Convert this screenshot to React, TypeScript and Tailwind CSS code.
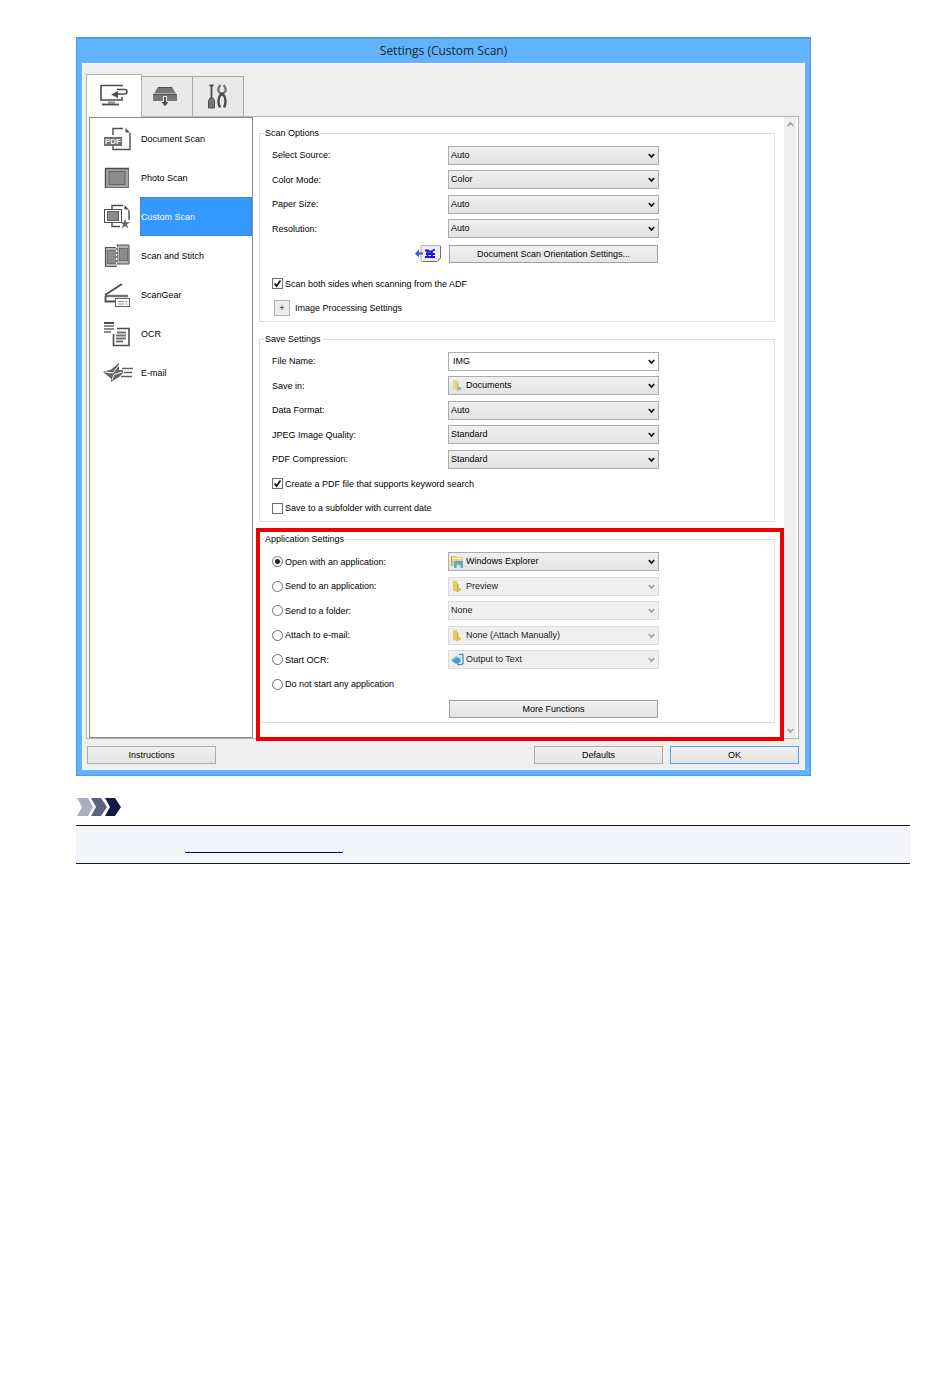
import { useState } from 'react';
import type { ReactNode } from 'react';

interface SelectBoxProps {
    id?: string;
    label: string;
    value: string;
    icon?: ReactNode;
    disabled?: boolean;
}

interface RowProps {
    label: string;
    htmlFor?: string;
    children: ReactNode;
}

const DARK = '#4d4d4d';
const MID = '#8c8c8c';

const Chevron = ({ color = '#111111' }: { color?: string }) => (
    <svg width="7" height="6" viewBox="0 0 7 6" fill="none">
        <path d="M0.8 1 L3.5 4 L6.2 1" stroke={color} strokeWidth="1.7" />
    </svg>
);

/* ---- tab icons ---- */

const ComputerIcon = () => (
    <svg width="28" height="24" viewBox="0 0 28 24" fill="none" stroke={DARK}>
        <path d="M22 2.5 V1.5 H1 V16 H22 V13" strokeWidth="1.6" />
        <path d="M17 5.5 H25 Q27 5.5 27 7.5 Q27 10 24.5 10 H17" strokeWidth="1.5" />
        <path d="M11 10.5 L18 7 V14 Z" fill={DARK} stroke="none" />
        <path d="M8 18.5 H15" stroke={MID} strokeWidth="2" />
        <path d="M2 20.5 H19" strokeWidth="1.8" />
    </svg>
);

const ScannerIcon = () => (
    <svg width="28" height="22" viewBox="0 0 28 22">
        <path d="M5 1 H19 L23 7.5 H1 Z" fill="#777777" />
        <path d="M5 1.5 H19" stroke={DARK} />
        <path d="M0 9 H24 V15 H0 Z" fill="#777777" />
        <path d="M0 8.5 H24" stroke={DARK} />
        <path d="M10.5 10.5 H13.5 V15.5 H16.5 L12 21 L7.5 15.5 H10.5 Z" fill={DARK} stroke="#eeeeee" />
    </svg>
);

const ToolsIcon = () => (
    <svg width="20" height="25" viewBox="0 0 20 25" fill="none">
        <path d="M1.5 1.5 H5.5 M3.5 1 V14" stroke={DARK} strokeWidth="1.8" />
        <path d="M2 14 H5 L6.5 17 V24 H0.5 V17 Z" fill="#777777" stroke={DARK} />
        <path d="M12.5 1 Q9.5 4 10.5 7.5 L14 10.5 L17.5 7.5 Q18.5 4 15.5 1" stroke="#777777" strokeWidth="2.2" />
        <path d="M13 10 Q8.5 16 12 23.5 M15 10 Q19.5 16 16 23.5" stroke={DARK} strokeWidth="2.4" />
        <circle cx="14" cy="10" r="1.8" fill={DARK} />
    </svg>
);

/* ---- sidebar icons, all on a 30x26 canvas ---- */

const ListIcon = ({ children }: { children: ReactNode }) => (
    <svg width="30" height="26" viewBox="0 0 30 26" fill="none">{children}</svg>
);

const DocumentIcon = () => (
    <ListIcon>
        <path d="M10 9 V2.5 H20 M10 20 V23.5 H27 V7" stroke={DARK} strokeWidth="1.4" />
        <path d="M22.5 2 V6.5 H27 Z" fill={DARK} />
        <rect x="1" y="11" width="18" height="9" fill="#707070" />
        <text x="10" y="18" textAnchor="middle" fontSize="8" fontWeight="bold" fill="#f4f4f4">PDF</text>
    </ListIcon>
);

const PhotoIcon = () => (
    <ListIcon>
        <rect x="2" y="3" width="24" height="20" fill="#a6a6a6" />
        <path d="M2.5 23 V3.5 H26" stroke={DARK} strokeWidth="1.4" />
        <path d="M25.5 4 V22.5 H3" stroke="#707070" />
        <rect x="6" y="6.5" width="16" height="13" fill={MID} stroke="#606060" />
    </ListIcon>
);

const CustomIcon = () => (
    <ListIcon>
        <path d="M9 6 V1.5 H20 M26 6 V16 M9 19 V22.5 H17" stroke={DARK} strokeWidth="1.4" />
        <path d="M21.5 1 V5.5 H26 Z" fill={DARK} />
        <rect x="1.5" y="5.5" width="17" height="13" fill="#ffffff" stroke={DARK} />
        <rect x="4.5" y="7.5" width="11" height="9" fill={MID} stroke="#606060" />
        <path d="M22 14.5 L23.3 18.3 H27 L24 20.5 L25.2 24.5 L22 22 L18.8 24.5 L20 20.5 L17 18.3 H20.7 Z" fill="#6a6a6a" />
    </ListIcon>
);

const StitchIcon = () => (
    <ListIcon>
        <path d="M2 4 H14 V24 H2 Z" fill="#b5b5b5" />
        <path d="M2.5 24 V4.5 H13" stroke={DARK} strokeWidth="1.2" />
        <rect x="4.5" y="7.5" width="8" height="13" fill={MID} stroke="#707070" />
        <path d="M14 2 H26 V21 H14 Z" fill="#b5b5b5" stroke={DARK} />
        <rect x="16.5" y="5.5" width="8" height="12" fill={MID} stroke="#707070" />
        <path d="M13.5 3 V23" stroke="#ffffff" strokeWidth="1.5" strokeDasharray="2 2" />
        <path d="M2 23.5 H14" stroke="#606060" />
    </ListIcon>
);

const ScanGearIcon = () => (
    <ListIcon>
        <path d="M2 13 L19 2" stroke={DARK} strokeWidth="1.8" />
        <path d="M2 14 H25" stroke="#707070" strokeWidth="2.4" />
        <path d="M2.5 14 V19.5 H12" stroke={DARK} strokeWidth="1.8" />
        <rect x="12.5" y="16.5" width="14" height="8" fill="#ffffff" stroke="#606060" />
        <path d="M15 19.5 H21 M15 22 H21 M22.5 19.5 H24.5 M22.5 22 H24.5" stroke={MID} />
    </ListIcon>
);

const OcrIcon = () => (
    <ListIcon>
        <path d="M1 2 H11" stroke={DARK} strokeWidth="2" />
        <path d="M1 5 H11 M1 8 H11 M1 11 H8" stroke={MID} strokeWidth="1.8" />
        <path d="M14 7.5 H26 V24.5 H10.5 V13" stroke={DARK} strokeWidth="1.6" />
        <path d="M14 11.5 H23 M13 14.5 H23 M13 17.5 H23 M13 20.5 H20" stroke="#707070" strokeWidth="1.8" />
    </ListIcon>
);

const EmailIcon = () => (
    <ListIcon>
        <path d="M0 12 L8 9.5 L16 3 V10 L20 10 V13 L16 17 L8 22 V18.5 Z" fill="#666666" />
        <path d="M2 12 L10 13 L16 5 M9 20 L11 14.5 L19 12" stroke="#ffffff" />
        <path d="M19 8.5 H31 M21 12.5 H29 M18 16.5 H29" stroke="#606060" strokeWidth="1.3" />
    </ListIcon>
);

/* ---- small icons inside the drop-downs ---- */

const FolderIcon = ({ faded = false }: { faded?: boolean }) => (
    <svg width="13" height="13" viewBox="0 0 13 13">
        <path d="M2 1 H6 V12 L2 10.5 Z" fill={faded ? '#ecd98f' : '#f0c95c'} />
        <path d="M6 3 L7.5 4 V12 H6 Z" fill={faded ? '#b8bfae' : '#d9a93a'} />
        <path d="M7 8 H10 V11 H7 Z" fill={faded ? '#93b3d0' : '#e8c65f'} />
    </svg>
);

const ExplorerIcon = () => (
    <svg width="13" height="13" viewBox="0 0 13 13">
        <path d="M0 1 H5 L6 2 H12 V11 H0 Z" fill="#f0cf6b" />
        <path d="M1 3.5 H11" stroke="#fff3c0" />
        <path d="M3 6 H12 V13 H9.5 V9.5 H5.5 V13 H3 Z" fill="#55a9dc" />
        <path d="M0.5 1 V11" stroke="#c99b35" />
    </svg>
);

const OutputIcon = () => (
    <svg width="13" height="13" viewBox="0 0 13 13">
        <path d="M8 1.5 L12 1 V11 L7 12 V9" fill="#d7eef7" stroke="#3c6f9c" />
        <path d="M0 7 L5 3 L9.5 5 V9 L5 11 Z" fill="#3fa3c9" />
        <path d="M1 7 L5 4 L9 5.5" stroke="#a5dcec" fill="none" />
    </svg>
);

const OrientationIcon = () => (
    <svg width="26" height="19" viewBox="0 0 26 19">
        <path d="M6 1.5 H25.5 V14 L22 17.5 H6 Z" fill="#eeeeee" stroke="#b4b4b4" />
        <path d="M25.5 2 V14 L22 17.5 H8" stroke="#6d6d6d" fill="none" />
        <path d="M0 9.5 L4 5.5 V8.5 H8 V10.5 H4 V13.5 Z" fill="#3757c8" />
        <path d="M10 6.5 H13 L15 8 L20 5.5 M10 13 H20 M11 10 H20 M12.5 6 V13 M17 8 V13" stroke="#1414e6" strokeWidth="1.8" fill="none" />
    </svg>
);

const SelectBox = ({ id, label, value, icon, disabled }: SelectBoxProps) => (
    <div className="relative w-[211px] shrink-0">
        <select
            id={id}
            aria-label={label}
            disabled={disabled}
            className={`block h-[19px] w-full appearance-none border pr-4 leading-[17px] opacity-100 outline-none ${icon ? 'pl-[17px]' : 'pl-[2px]'} ${
                disabled
                    ? 'border-[#dcdcdc] bg-[#efefef] text-[#222222]'
                    : 'border-[#acacac] bg-linear-to-b from-[#f0f0f0] to-[#e3e3e3] text-black'
            }`}
        >
            <option>{value}</option>
        </select>
        {icon && <span className="pointer-events-none absolute top-[3px] left-[3px]">{icon}</span>}
        <span className="pointer-events-none absolute top-[7px] right-[4px]">
            <Chevron color={disabled ? '#a0a0a0' : '#111111'} />
        </span>
    </div>
);

const Row = ({ label, htmlFor, children }: RowProps) => (
    <div className="flex items-center odd:h-[25px] even:h-6">
        <label htmlFor={htmlFor} className="w-44 shrink-0">{label}</label>
        {children}
    </div>
);

const CheckRow = ({ label, defaultChecked }: { label: string; defaultChecked?: boolean }) => (
    <label className="flex items-center gap-[2px] odd:h-[25px] even:h-6">
        <span className="relative">
            <input
                type="checkbox"
                defaultChecked={defaultChecked}
                className="peer block size-[11px] appearance-none border border-[#707070] bg-white"
            />
            <svg className="pointer-events-none absolute top-0 left-0 hidden peer-checked:block" width="11" height="11" viewBox="0 0 11 11" fill="none">
                <path d="M2.5 5.5 L4.5 8 L8.5 2.5" stroke="#111111" strokeWidth="1.7" />
            </svg>
        </span>
        {label}
    </label>
);

const Group = ({ title, children }: { title: string; children: ReactNode }) => (
    <fieldset className="border border-[#dedede] pt-[3px] pr-3 pb-px pl-3">
        <legend className="-ml-2 px-px leading-[14px]">{title}</legend>
        {children}
    </fieldset>
);

const Button = ({ children, className }: { children: ReactNode; className: string }) => (
    <button className={`h-[18px] border bg-linear-to-b from-[#f0f0f0] to-[#e5e5e5] text-center leading-4 text-black ${className}`}>
        {children}
    </button>
);

const scanTypes = [
    { name: 'Document Scan', icon: <DocumentIcon /> },
    { name: 'Photo Scan', icon: <PhotoIcon /> },
    { name: 'Custom Scan', icon: <CustomIcon /> },
    { name: 'Scan and Stitch', icon: <StitchIcon /> },
    { name: 'ScanGear', icon: <ScanGearIcon /> },
    { name: 'OCR', icon: <OcrIcon /> },
    { name: 'E-mail', icon: <EmailIcon /> },
];

const scanOptions = [
    { label: 'Select Source:', value: 'Auto' },
    { label: 'Color Mode:', value: 'Color' },
    { label: 'Paper Size:', value: 'Auto' },
    { label: 'Resolution:', value: 'Auto' },
];

const saveOptions = [
    { label: 'Save in:', value: 'Documents', icon: <FolderIcon faded /> },
    { label: 'Data Format:', value: 'Auto' },
    { label: 'JPEG Image Quality:', value: 'Standard' },
    { label: 'PDF Compression:', value: 'Standard' },
];

const appOptions = [
    { label: 'Open with an application:', value: 'Windows Explorer', icon: <ExplorerIcon /> },
    { label: 'Send to an application:', value: 'Preview', icon: <FolderIcon /> },
    { label: 'Send to a folder:', value: 'None' },
    { label: 'Attach to e-mail:', value: 'None (Attach Manually)', icon: <FolderIcon /> },
    { label: 'Start OCR:', value: 'Output to Text', icon: <OutputIcon /> },
    { label: 'Do not start any application' },
];

const Tabs = () => (
    <div role="tablist" className="flex items-end">
        <button role="tab" aria-selected="true" aria-label="Scanning from a computer" className="relative -mb-px flex h-[43px] w-14 items-center justify-center border border-b-0 border-[#b0b0b0] bg-white">
            <ComputerIcon />
        </button>
        <button role="tab" aria-selected="false" aria-label="Scanning from the operation panel" className="flex h-10 w-[51px] items-center justify-center border-t border-r border-[#a8a8a8] bg-[#e9e9e9]">
            <ScannerIcon />
        </button>
        <button role="tab" aria-selected="false" aria-label="General settings" className="flex h-10 w-[51px] items-center justify-center border-t border-r border-[#a8a8a8] bg-[#e9e9e9]">
            <ToolsIcon />
        </button>
    </div>
);

const Sidebar = () => {
    const [selected, setSelected] = useState('Custom Scan');

    return (
        <nav className="w-[164px] shrink-0 border border-[#8e8e8e] bg-white pt-px">
            {scanTypes.map((item) => (
                <button key={item.name} onClick={() => setSelected(item.name)} className="flex h-[39px] w-full items-center text-left">
                    <span className="flex w-[50px] shrink-0 justify-end pr-[7px]">{item.icon}</span>
                    <span
                        className={`flex h-full flex-1 items-center border ${
                            selected === item.name ? 'border-[#4a86c4] bg-[#3399ff] text-white' : 'border-transparent'
                        }`}
                    >
                        {item.name}
                    </span>
                </button>
            ))}
        </nav>
    );
};

const ApplicationSettings = () => {
    const [active, setActive] = useState(0);

    return (
        <Group title="Application Settings">
            {appOptions.map((option, index) => (
                <div key={option.label} className="flex items-center odd:h-6 even:h-[25px]">
                    <label className="flex w-44 shrink-0 items-center gap-[2px]">
                        <input
                            type="radio"
                            name="application"
                            checked={active === index}
                            onChange={() => setActive(index)}
                            className="size-[11px] appearance-none rounded-full border border-[#707070] bg-white checked:bg-[radial-gradient(circle,#222222_0_2px,#ffffff_3px)]"
                        />
                        <span className="whitespace-nowrap">{option.label}</span>
                    </label>
                    {option.value && (
                        <SelectBox label={option.label} value={option.value} icon={option.icon} disabled={active !== index} />
                    )}
                </div>
            ))}
            <div className="flex h-[25px] items-center pl-[177px]">
                <Button className="w-[209px] border-[#a0a0a0]">More Functions</Button>
            </div>
        </Group>
    );
};

const SettingsDialog = () => (
    <section className="w-full max-w-[735px] border border-t-2 border-[#4f9ce6] bg-[#62b3fb] px-[5px] pb-[5px] text-[9px] leading-3 text-black">
        <h1 className="h-6 text-center font-['Open_Sans',sans-serif] text-xs leading-6 text-[#10263c]">Settings (Custom Scan)</h1>
        <div className="border border-white bg-[#efefef] pt-[10px] pr-[5px] pb-[5px] pl-[3px]">
            <Tabs />
            <div className="flex border border-[#b4b4b4] bg-white px-[2px]">
                <Sidebar />
                <div className="flex min-w-0 flex-1 flex-col gap-[10px] pt-[9px] pr-[9px] pb-[15px] pl-[6px]">
                    <Group title="Scan Options">
                        {scanOptions.map((option, index) => (
                            <Row key={option.label} label={option.label} htmlFor={`scan-${index}`}>
                                <SelectBox id={`scan-${index}`} label={option.label} value={option.value} />
                            </Row>
                        ))}
                        <div className="flex h-[25px] items-center">
                            <span className="flex w-[177px] shrink-0 justify-end pr-2">
                                <OrientationIcon />
                            </span>
                            <Button className="w-[209px] border-[#a0a0a0]">Document Scan Orientation Settings...</Button>
                        </div>
                        <div className="pt-[5px]">
                            <CheckRow label="Scan both sides when scanning from the ADF" defaultChecked />
                            <div className="flex h-6 items-center gap-[5px] pl-[2px]">
                                <button id="expand" className="flex size-4 items-center justify-center border border-[#b0b0b0] bg-[#ececec]">+</button>
                                <label htmlFor="expand">Image Processing Settings</label>
                            </div>
                        </div>
                    </Group>
                    <Group title="Save Settings">
                        <Row label="File Name:" htmlFor="file-name">
                            <div className="relative w-[211px] shrink-0">
                                <input id="file-name" type="text" defaultValue="IMG" className="block h-[19px] w-full border border-[#acacac] bg-white pr-4 pl-1 outline-none" />
                                <button aria-label="Recent file names" className="absolute top-[7px] right-[4px]">
                                    <Chevron />
                                </button>
                            </div>
                        </Row>
                        {saveOptions.map((option, index) => (
                            <Row key={option.label} label={option.label} htmlFor={`save-${index}`}>
                                <SelectBox id={`save-${index}`} label={option.label} value={option.value} icon={option.icon} />
                            </Row>
                        ))}
                        <CheckRow label="Create a PDF file that supports keyword search" defaultChecked />
                        <CheckRow label="Save to a subfolder with current date" />
                    </Group>
                    <div className="relative">
                        <ApplicationSettings />
                        {/* highlight frame */}
                        <div className="pointer-events-none absolute -top-1 -right-[9px] -bottom-[18px] -left-[3px] border-4 border-[#ee0000]" />
                    </div>
                </div>
                <div className="flex w-3 flex-col items-center justify-between bg-[#efefef] py-1">
                    <span className="rotate-180"><Chevron color="#a0a0a0" /></span>
                    <Chevron color="#a0a0a0" />
                </div>
            </div>
            <div className="flex gap-[7px] pt-[7px] pl-px">
                <Button className="mr-auto w-[129px] border-[#acacac]">Instructions</Button>
                <Button className="w-[129px] border-[#acacac]">Defaults</Button>
                <Button className="w-[129px] border-[#5aa5e8]">OK</Button>
            </div>
        </div>
    </section>
);

const App: React.FC = () => (
    <main className="min-h-screen bg-white pt-[37px] pr-10 pl-[76px] font-['Liberation_Sans',sans-serif]">
        <SettingsDialog />
        <svg className="mt-[22px]" width="45" height="18" viewBox="0 0 45 18">
            <path d="M1 0 H12 L17 9 L12 18 H1 L6 9 Z" fill="#a9adbd" />
            <path d="M15 0 H25 L31 9 L25 18 H15 L20 9 Z" fill="#5b6384" />
            <path d="M29 0 H39 L45 9 L39 18 H29 L34 9 Z" fill="#0f1a45" />
        </svg>
        <div className="mt-[9px] h-[39px] border-y border-[#12123a] bg-[#f3f5fb] pl-[109px]">
            <a href="#dialog" aria-label="Settings Dialog Box" className="block h-[27px] w-[158px] border-b border-[#000080]" />
        </div>
    </main>
);

export default App;
